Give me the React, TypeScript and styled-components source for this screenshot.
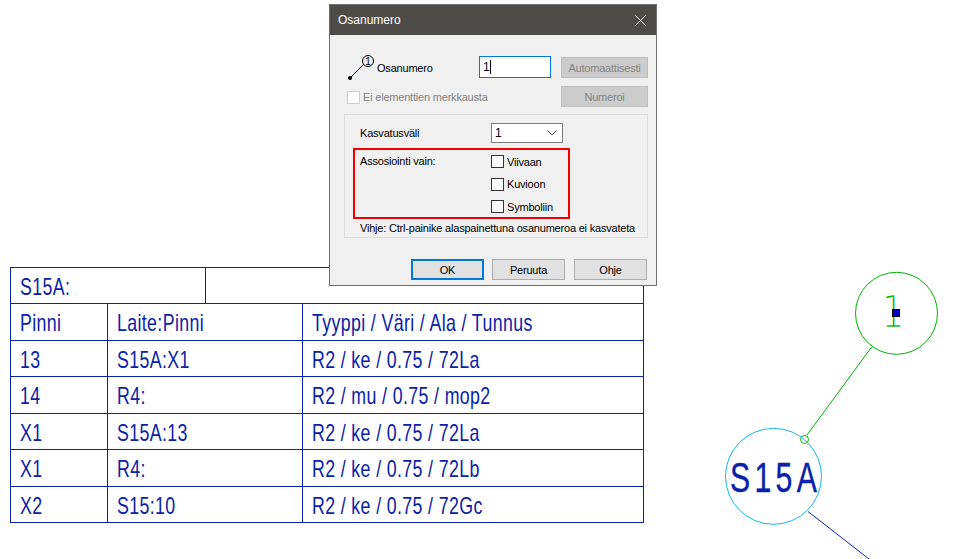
import React from "react";
import styled, { createGlobalStyle } from "styled-components";

const rows = [
  ["13", "S15A:X1", "R2 / ke / 0.75 / 72La"],
  ["14", "R4:", "R2 / mu / 0.75 / mop2"],
  ["X1", "S15A:13", "R2 / ke / 0.75 / 72La"],
  ["X1", "R4:", "R2 / ke / 0.75 / 72Lb"],
  ["X2", "S15:10", "R2 / ke / 0.75 / 72Gc"],
];

const App: React.FC = () => {
  return (
    <Canvas>
      <GlobalStyle />
      <Schematic width="972" height="559" viewBox="0 0 972 559">
        <text
          transform="translate(893 328) scale(0.8 1)"
          textAnchor="middle"
          fontFamily="'DejaVu Sans', sans-serif"
          fontSize="46"
          fill="#00b000"
          stroke="#fff"
          strokeWidth="2.4"
          paintOrder="fill stroke"
        >
          1
        </text>
        <circle cx="896.5" cy="313.3" r="41" fill="none" stroke="#00b000" />
        <line x1="872" y1="346.5" x2="807" y2="435" stroke="#00b000" />
        <circle cx="804.5" cy="439.5" r="4" fill="none" stroke="#00b000" />
        <rect x="892.5" y="309.5" width="7" height="7" fill="#0000c8" stroke="#000" />
        <circle cx="773.5" cy="476.3" r="48" fill="none" stroke="#18b4f0" />
        <text
          transform="translate(730 491.5) scale(0.72 1)"
          fontFamily="'Liberation Sans', sans-serif"
          fontSize="42"
          letterSpacing="6"
          fill="#0a22a8"
          stroke="#0a22a8"
          strokeWidth="0.4"
        >
          S15A
        </text>
        <line x1="808" y1="511.5" x2="869" y2="559" stroke="#0a22a8" />
      </Schematic>

      <WireTable>
        <TitleRow>
          <TitleCell>
            <CellText>S15A:</CellText>
          </TitleCell>
        </TitleRow>
        <Row>
          <PinCell><CellText>Pinni</CellText></PinCell>
          <DeviceCell><CellText>Laite:Pinni</CellText></DeviceCell>
          <TypeCell><CellText>Tyyppi / Väri / Ala / Tunnus</CellText></TypeCell>
        </Row>
        {rows.map((r, i) => (
          <Row key={i}>
            <PinCell><CellText>{r[0]}</CellText></PinCell>
            <DeviceCell><CellText>{r[1]}</CellText></DeviceCell>
            <TypeCell><CellText>{r[2]}</CellText></TypeCell>
          </Row>
        ))}
      </WireTable>

      <Dialog>
        <TitleBar>
          <span>Osanumero</span>
          <svg width="11" height="11" viewBox="0 0 11 11">
            <path d="M0.5 0.5L10.5 10.5M10.5 0.5L0.5 10.5" stroke="#fff" strokeWidth="1" fill="none" />
          </svg>
        </TitleBar>
        <Body>
          <TopGrid>
            <IconLabel>
              <svg width="30" height="26" viewBox="0 0 30 26">
                <line x1="3" y1="23" x2="18" y2="8" stroke="#000" />
                <circle cx="3" cy="23" r="2" fill="#000" />
                <circle cx="21" cy="6" r="5.5" fill="#f0f0f0" stroke="#000" />
                <text x="21" y="9.5" textAnchor="middle" fontFamily="'Liberation Sans', sans-serif" fontSize="10" fill="#000">1</text>
              </svg>
              <span>Osanumero</span>
            </IconLabel>
            <NumberInput>
              1<Caret />
            </NumberInput>
            <AutoButton>Automaattisesti</AutoButton>
            <DisabledCheck>
              <CheckBox $disabled />
              <span>Ei elementtien merkkausta</span>
            </DisabledCheck>
            <SideButton>Numeroi</SideButton>
          </TopGrid>

          <Group>
            <StepRow>
              <span>Kasvatusväli</span>
              <Select>
                <span>1</span>
                <svg width="10" height="6" viewBox="0 0 10 6">
                  <path d="M0.5 0.5L5 5L9.5 0.5" stroke="#444" fill="none" />
                </svg>
              </Select>
            </StepRow>
            <RedBox>
              <AssocLabel>Assosiointi vain:</AssocLabel>
              <CheckList>
                {["Viivaan", "Kuvioon", "Symboliin"].map((t) => (
                  <CheckRow key={t}>
                    <CheckBox />
                    <span>{t}</span>
                  </CheckRow>
                ))}
              </CheckList>
            </RedBox>
            <Hint>Vihje: Ctrl-painike alaspainettuna osanumeroa ei kasvateta</Hint>
          </Group>

          <ButtonRow>
            <FooterButton $primary>OK</FooterButton>
            <FooterButton>Peruuta</FooterButton>
            <FooterButton>Ohje</FooterButton>
          </ButtonRow>
        </Body>
      </Dialog>
    </Canvas>
  );
};

const GlobalStyle = createGlobalStyle`
  html, body {
    margin: 0;
    padding: 0;
    background: #fff;
  }
`;

const Canvas = styled.div`
  position: relative;
  width: 972px;
  height: 559px;
  overflow: hidden;
  background: #fff;
`;

const Schematic = styled.svg`
  position: absolute;
  left: 0;
  top: 0;
`;

const WireTable = styled.div`
  position: absolute;
  left: 10px;
  top: 267px;
  width: 634px;
  box-sizing: border-box;
  border-top: 1px solid #0a22a8;
  border-left: 1px solid #0a22a8;
  border-right: 1px solid #0a22a8;
  font-family: "Liberation Sans", Arial, sans-serif;
  font-size: 24px;
  color: #0a22a8;
`;

const Row = styled.div`
  display: flex;
  height: 36.5px;
  box-sizing: border-box;
  border-bottom: 1px solid #0a22a8;
`;

const TitleRow = styled(Row)`
  height: 36px;
`;

const Cell = styled.div`
  display: flex;
  align-items: center;
  box-sizing: border-box;
  padding: 3px 0 0 9px;
  white-space: nowrap;
`;

const TitleCell = styled(Cell)`
  width: 195px;
  border-right: 1px solid #0a22a8;
`;

const PinCell = styled(Cell)`
  width: 97px;
  border-right: 1px solid #0a22a8;
`;

const DeviceCell = styled(Cell)`
  width: 195px;
  border-right: 1px solid #0a22a8;
`;

const TypeCell = styled(Cell)`
  flex: 1;
`;

const CellText = styled.span`
  display: inline-block;
  letter-spacing: 0.5px;
  transform: scaleX(0.74);
  transform-origin: left center;
`;

const Dialog = styled.div`
  position: absolute;
  left: 329px;
  top: 4px;
  width: 328px;
  height: 282px;
  box-sizing: border-box;
  display: flex;
  flex-direction: column;
  background: #f0f0f0;
  border: 1px solid #6e6e6e;
  font-family: "Liberation Sans", Arial, sans-serif;
  font-size: 11px;
  letter-spacing: -0.2px;
  color: #000;
`;

const TitleBar = styled.div`
  height: 30px;
  flex: none;
  display: flex;
  align-items: center;
  justify-content: space-between;
  padding: 0 10px 0 8px;
  background: #4d4b48;
  color: #fff;
  font-size: 12px;
  letter-spacing: 0;
`;

const Body = styled.div`
  flex: 1;
  padding: 21px 8px 0 14px;
`;

const TopGrid = styled.div`
  display: grid;
  grid-template-columns: 132px 72px 97px;
  grid-template-rows: 22px 21px;
  row-gap: 8px;
  padding-left: 3px;
`;

const IconLabel = styled.div`
  display: flex;
  align-items: center;
  margin-top: 1px;
  & > svg {
    flex: none;
  }
`;

const NumberInput = styled.div`
  box-sizing: border-box;
  display: flex;
  align-items: center;
  height: 22px;
  padding-left: 3px;
  background: #fff;
  border: 1px solid #0078d7;
  font-size: 12px;
`;

const Caret = styled.i`
  display: inline-block;
  width: 1px;
  height: 14px;
  margin-left: 1px;
  background: #000;
`;

const SideButton = styled.div`
  width: 87px;
  height: 21px;
  box-sizing: border-box;
  margin-left: 10px;
  display: flex;
  align-items: center;
  justify-content: center;
  background: #cccccc;
  border: 1px solid #bfbfbf;
  color: #838383;
`;

const AutoButton = styled(SideButton)`
  margin-top: 1px;
`;

const DisabledCheck = styled.div`
  grid-column: span 2;
  display: flex;
  align-items: center;
  gap: 3px;
  padding-top: 1px;
  color: #838383;
`;

const CheckBox = styled.div<{ $disabled?: boolean }>`
  width: 13px;
  height: 13px;
  box-sizing: border-box;
  flex: none;
  background: #fff;
  border: 1px solid ${({ $disabled }) => ($disabled ? "#cccccc" : "#333333")};
`;

const Group = styled.div`
  width: 304px;
  height: 124px;
  box-sizing: border-box;
  margin-top: 7px;
  padding: 8px 9px 0;
  border: 1px solid #dcdcdc;
`;

const StepRow = styled.div`
  display: flex;
  align-items: center;
  height: 20px;
  padding-left: 6px;
  & > span {
    width: 131px;
  }
`;

const Select = styled.div`
  width: 72px;
  height: 20px;
  box-sizing: border-box;
  display: flex;
  align-items: center;
  justify-content: space-between;
  padding: 0 5px 0 3px;
  background: #fff;
  border: 1px solid #7a7a7a;
  font-size: 12px;
`;

const RedBox = styled.div`
  display: flex;
  box-sizing: border-box;
  width: 217px;
  height: 71px;
  margin: 5px 0 0 -1px;
  padding: 5px 0 0 5px;
  border: 2px solid #f00000;
`;

const AssocLabel = styled.div`
  width: 131px;
  flex: none;
  line-height: 13px;
`;

const CheckList = styled.div`
  display: flex;
  flex-direction: column;
  gap: 9.5px;
`;

const CheckRow = styled.div`
  display: flex;
  align-items: center;
  gap: 3px;
  height: 13px;
`;

const Hint = styled.div`
  margin-top: 2px;
  padding-left: 6px;
  line-height: 14px;
  white-space: nowrap;
`;

const ButtonRow = styled.div`
  display: flex;
  gap: 9px;
  margin: 21px 0 0 67px;
  & > :first-child {
    margin-right: -1px;
  }
`;

const FooterButton = styled.div<{ $primary?: boolean }>`
  width: 73px;
  height: 21px;
  box-sizing: border-box;
  display: flex;
  align-items: center;
  justify-content: center;
  background: #e1e1e1;
  border: ${({ $primary }) => ($primary ? "2px solid #0078d7" : "1px solid #adadad")};
`;

export default App;
